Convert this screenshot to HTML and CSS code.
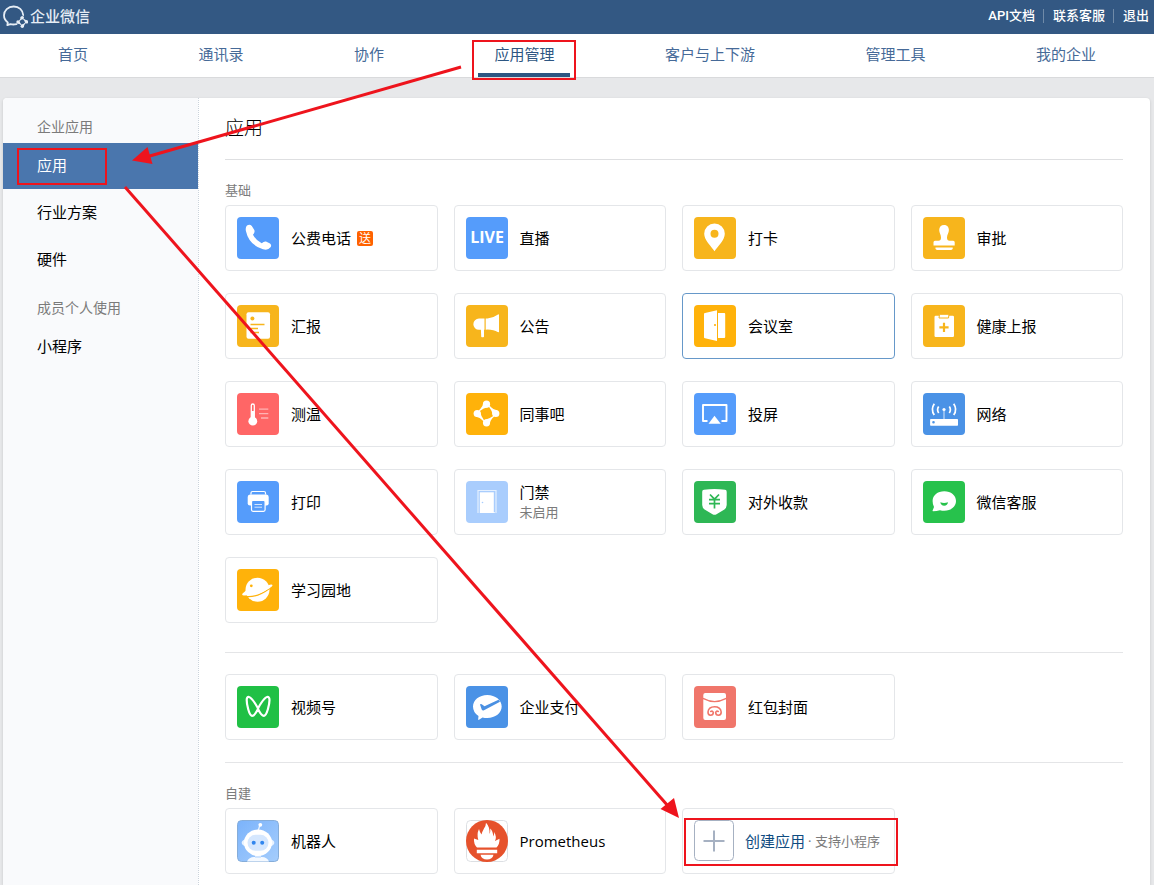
FILE: index.html
```html
<!DOCTYPE html>
<html lang="zh-CN">
<head>
<meta charset="utf-8">
<meta name="viewport" content="width=device-width, initial-scale=1">
<title>企业微信 - 应用管理</title>
<link rel="stylesheet" href="styles.css">
</head>
<body>
<header class="topbar">
  <a class="brand" href="#">
    <svg class="brand-mark" width="25" height="24" viewBox="0 0 25 24" fill="none" stroke="#e6edf5" stroke-width="1.8" stroke-linecap="round" stroke-linejoin="round" aria-hidden="true">
      <path d="M20.200 11C19.800 6 16 2.500 10.700 2.500C5 2.500 1 6.500 1 11.300C1 14.300 2.500 16.800 4.800 18.400L4.300 21.100L7.500 20.100C9.500 20.700 11.500 20.600 13.500 20.100"/>
      <g fill="#e6edf5" stroke="none"><g id="leaf"><circle cx="19.300" cy="13.600" r="1.700"/><path d="M17.800 12.800Q17.700 15 15.900 16.800L16.400 17.300Q18.200 15.600 20.300 15Z"/></g><use href="#leaf" transform="rotate(90 19.300 17.900)"/><use href="#leaf" transform="rotate(180 19.300 17.900)"/><use href="#leaf" transform="rotate(270 19.300 17.900)"/></g>
    </svg>
    <span>企业微信</span>
  </a>
  <nav class="toplinks" aria-label="账户">
    <a href="#">API文档</a>
    <a href="#">联系客服</a>
    <a href="#">退出</a>
  </nav>
</header>

<nav class="mainnav" aria-label="主导航">
  <a href="#">首页</a>
  <a href="#">通讯录</a>
  <a href="#">协作</a>
  <a class="current" href="#" aria-current="page">应用管理</a>
  <a href="#">客户与上下游</a>
  <a href="#">管理工具</a>
  <a href="#">我的企业</a>
</nav>

<div class="panel">
  <aside class="sidebar">
    <h2>企业应用</h2>
    <a class="current" href="#">应用</a>
    <a href="#">行业方案</a>
    <a href="#">硬件</a>
    <h2 class="second">成员个人使用</h2>
    <a href="#">小程序</a>
  </aside>

  <main class="content">
    <h1>应用</h1>

    <section class="group">
      <h3>基础</h3>
      <div class="cards">
        <a class="card" href="#">
          <svg class="icon sky" viewBox="0 0 42 42"><path fill="#fff" d="M10 8.500Q12.800 6.600 14.800 9L17.300 13Q18.300 15.200 16 17.700Q19 23.400 24.700 26.200Q27 24.200 29 24.600L33 26.500Q35 28 33.500 30.300Q31 33.800 26 32.300Q12 28 8.900 14Q8.200 10 10 8.500Z"/></svg>
          <span class="name">公费电话</span><span class="badge">送</span>
        </a>
        <a class="card" href="#">
          <svg class="icon sky" viewBox="0 0 42 42"><text class="live" x="21" y="26" text-anchor="middle">LIVE</text></svg>
          <span class="name">直播</span>
        </a>
        <a class="card" href="#">
          <svg class="icon amber" viewBox="0 0 42 42"><path fill="#fff" fill-rule="evenodd" d="M20.500 34.300C17 29 10.200 23 10.200 16.700A10.300 10.300 0 0 1 30.800 16.700C30.800 23 24 29 20.500 34.300ZM20.500 12.700a4 4 0 1 0 0 8a4 4 0 0 0 0-8Z"/></svg>
          <span class="name">打卡</span>
        </a>
        <a class="card" href="#">
          <svg class="icon amber" viewBox="0 0 42 42" fill="#fff"><path d="M16.200 13C16.200 9.800 18.200 7.900 21 7.900S25.900 9.800 25.900 13C25.900 16 24 17.500 24 20.500Q24 23.700 26.500 23.700H30.200Q31.700 23.700 31.700 25.200V28.600H10.500V25.200Q10.500 23.700 12 23.700H15.500Q18 23.700 18 20.500C18 17.500 16.200 16 16.200 13Z"/><path d="M12.500 30.500H29.700V31.300Q29.700 33 28 33H14.200Q12.500 33 12.500 31.300Z"/></svg>
          <span class="name">审批</span>
        </a>
        <a class="card" href="#">
          <svg class="icon amber" viewBox="0 0 42 42"><rect x="9.500" y="7.300" width="23.500" height="26.500" rx="2" fill="#fff"/><circle cx="15.400" cy="13.600" r="2" fill="#f7b51c"/><path stroke="#f7b51c" stroke-width="1.500" d="M13.500 19.600H27.500M13.500 23.500H21M13.500 27.600H22"/></svg>
          <span class="name">汇报</span>
        </a>
        <a class="card" href="#">
          <svg class="icon amber" viewBox="0 0 42 42" fill="#fff"><path d="M18.500 13.500V24.800H18V31.500Q18 32.300 17.200 32.300H15.900Q15.200 32.300 15.200 31.500L14.900 24.800H13A5.600 5.600 0 0 1 13 13.500ZM19.700 13.500H21.500Q28 12.500 32 9.400Q33 9 33 10V26.500Q33 27.800 31.700 27Q28 24.800 21.500 24.500L19.700 24.800Z"/></svg>
          <span class="name">公告</span>
        </a>
        <a class="card hover" href="#">
          <svg class="icon orange" viewBox="0 0 42 42"><path fill="#fff" d="M10 9Q10 8.200 11 8L23 5.300V36L11 33.300Q10 33 10 32.200ZM24 8H30.300Q31.200 8 31.200 9V32Q31.200 33 30.200 33H24Z"/><circle cx="21" cy="20" r="1.100" fill="#ffb20a"/></svg>
          <span class="name">会议室</span>
        </a>
        <a class="card" href="#">
          <svg class="icon amber" viewBox="0 0 42 42"><rect x="11.500" y="10.800" width="19.500" height="21.200" rx="1.200" fill="#fff"/><path d="M16.500 9.300H26L25.500 13H16Z" fill="#fff" stroke="#f7b51c" stroke-width="1"/><path stroke="#f7b51c" stroke-width="2.200" d="M21 17.800V27M16.400 22.400H25.600"/></svg>
          <span class="name">健康上报</span>
        </a>
        <a class="card" href="#">
          <svg class="icon coral" viewBox="0 0 42 42"><path d="M14.300 26V12.500a1.500 1.500 0 0 1 3 0V26" fill="#ff6666" stroke="#fff" stroke-width="1.300"/><path stroke="#fff" stroke-width="3" d="M15.800 18V28"/><circle cx="15.800" cy="28.200" r="4.400" fill="#fff"/><path stroke="#ffb3b3" stroke-width="1.300" d="M22 16.200H31.300M22 20.700H31.300M24 25H31.300"/></svg>
          <span class="name">测温</span>
        </a>
        <a class="card" href="#">
          <svg class="icon orange" viewBox="0 0 42 42" fill="#fff"><g id="petal"><circle cx="20.500" cy="11.200" r="3.600"/><path d="M17.300 9.600Q17 13.800 12.800 17.400L13.500 18.200Q17.500 15 22.500 14.100Z"/></g><use href="#petal" transform="rotate(90 20.500 20.500)"/><use href="#petal" transform="rotate(180 20.500 20.500)"/><use href="#petal" transform="rotate(270 20.500 20.500)"/></svg>
          <span class="name">同事吧</span>
        </a>
        <a class="card" href="#">
          <svg class="icon sky" viewBox="0 0 42 42"><path fill="none" stroke="#fff" stroke-width="1.900" stroke-linejoin="round" d="M13.500 28H9V12H32.500V28H27.500"/><path fill="#fff" d="M20.500 22.800L26.700 30.800H14.500Z"/></svg>
          <span class="name">投屏</span>
        </a>
        <a class="card" href="#">
          <svg class="icon blue" viewBox="0 0 42 42"><path fill="#fff" fill-rule="evenodd" d="M7.800 26H34.300Q35 26 35 26.700V32Q35 32.700 34.300 32.700H7.800Q7.100 32.700 7.100 32V26.700Q7.100 26 7.800 26ZM10.500 28a1.300 1.300 0 1 0 0 2.600a1.300 1.300 0 0 0 0-2.600Z"/><circle cx="21" cy="16.500" r="1.600" fill="#fff"/><path fill="none" stroke="#fff" stroke-width="1.700" d="M15.700 13.500Q13.500 16.700 15.700 20M26.300 13.500Q28.500 16.700 26.300 20M11.300 10.700Q7.400 16.500 11.300 22M30.700 10.700Q34.600 16.500 30.700 22"/><path stroke="#fff" stroke-width=".8" d="M21 18V26"/></svg>
          <span class="name">网络</span>
        </a>
        <a class="card" href="#">
          <svg class="icon sky" viewBox="0 0 42 42"><path fill="none" stroke="#fff" stroke-width="1.200" d="M14 13.500V12Q14 10.500 15.500 10.500H27Q28.500 10.500 28.500 12V13.500"/><path fill="#fff" d="M13 13.500H29.500Q31.700 13.500 31.700 16V22.500Q31.700 24.500 29.500 24.500H13Q10.700 24.500 10.700 22.500V16Q10.700 13.500 13 13.500Z"/><rect x="14.500" y="19.300" width="13.600" height="11" rx="1.500" fill="#559cfb" stroke="#fff" stroke-width="1.200"/><path stroke="#d4e6fe" stroke-width="1" d="M17.500 23.500H25M17.500 26.200H25"/></svg>
          <span class="name">打印</span>
        </a>
        <a class="card" href="#">
          <svg class="icon pale" viewBox="0 0 42 42"><path fill="none" stroke="#e4f0ff" stroke-width="1.200" d="M12 32V9.500H30V32M29 31.500H27"/><rect x="13.800" y="11.300" width="14" height="20.700" fill="#fff"/><circle cx="16.500" cy="21.500" r=".8" fill="#a9cdfd"/></svg>
          <span class="stack"><span class="name">门禁</span><small>未启用</small></span>
        </a>
        <a class="card" href="#">
          <svg class="icon green" viewBox="0 0 42 42"><path fill="#fff" d="M10 8.800Q20.500 7.200 31 8.800Q32.700 9 32.700 10.700V24Q32.700 27 30 28.700L22.500 33.200Q20.500 34.500 18.500 33.200L11 28.700Q8.200 27 8.200 24V10.700Q8.200 9 10 8.800Z"/><path fill="none" stroke="#2eb755" stroke-width="1.700" d="M16 13.500L20.500 18.200L25 13.500M15 18.700H26M15 22.700H26M20.500 18V27.500"/></svg>
          <span class="name">对外收款</span>
        </a>
        <a class="card" href="#">
          <svg class="icon lime" viewBox="0 0 42 42"><path fill="#fff" d="M21.300 10.300C28 10.300 33 14.500 33 20S28 29.800 21.300 29.800Q19 29.800 17 29.200Q13.500 30 10 30.200Q9.300 30 9.700 29.300L11 26Q9.600 23.500 9.600 20C9.600 14.500 14.600 10.300 21.300 10.300Z"/><path fill="#27c24c" d="M17.300 21.300Q21 22.700 25 21.300Q24.500 24.700 21.200 24.700T17.300 21.300Z"/></svg>
          <span class="name">微信客服</span>
        </a>
        <a class="card" href="#">
          <svg class="icon orange" viewBox="0 0 42 42"><circle cx="20.500" cy="20.700" r="12" fill="#fff"/><path fill="none" stroke="#ffb20a" stroke-width="1.200" d="M8 27.500Q20 29 32.500 19.500"/><path fill="#fff" d="M9 21.500L5.600 24.500Q4.300 26.300 7 26.500Q24 26.500 34.800 17.500Q36.500 15.500 34 15.600L31 16.200L31.500 18Q22 24.500 9.300 24Z"/><circle cx="14.300" cy="16.800" r="1.400" fill="#ffb20a"/></svg>
          <span class="name">学习园地</span>
        </a>
      </div>
    </section>

    <section class="group plain">
      <div class="cards">
        <a class="card" href="#">
          <svg class="icon grass" viewBox="0 0 42 42"><path fill="none" stroke="#fff" stroke-width="2.200" stroke-linejoin="round" d="M21 23C19 27 17 30 15 29.800C12 29.500 9.700 18 9.700 14C9.700 11.500 10.700 10.700 12 11C15.500 12 21 22 21 23C23 27 25 30 27 29.800C30 29.500 32.500 18 32.500 14C32.500 11.500 31.500 10.700 30 11C26.500 12 21 22 21 23Z"/></svg>
          <span class="name">视频号</span>
        </a>
        <a class="card" href="#">
          <svg class="icon blue" viewBox="0 0 42 42"><path fill="#fff" d="M21.300 9C29.300 9 35.700 14 35.700 20.500S29.300 32 21.300 32Q18.700 32 16.500 31.500L13 33.800Q12 34.200 12.200 33L12.500 30Q7 26.500 7 20.500C7 14 13.300 9 21.300 9Z"/><path fill="#4a90e2" d="M14 18.500Q14.500 17.500 15.700 18.200L18.500 20.200L32.500 13.800Q33.600 14.800 34 15.800L18 24.300Q16.500 25.200 15.700 23.500Z"/></svg>
          <span class="name">企业支付</span>
        </a>
        <a class="card" href="#">
          <svg class="icon salmon" viewBox="0 0 42 42"><path fill="#fff" d="M9.300 9Q9.300 7 11.300 7H30Q32 7 32 9V11.800Q20.500 18 9.300 11.800ZM9.300 13.300Q20.500 19.300 32 13.300V32Q32 34 30 34H11.300Q9.300 34 9.300 32Z"/><path fill="none" stroke="#f0766b" stroke-width="1.600" stroke-linecap="round" d="M16.700 25.500Q18.700 24.500 19.300 26.500Q19.300 29.300 16.500 29.300Q14 29 14 26Q14.500 20.700 20.500 20.700T27.200 26Q27.200 29 24.500 29.300Q21.700 29.300 21.700 26.500Q22.200 24.500 24.300 25.500"/></svg>
          <span class="name">红包封面</span>
        </a>
      </div>
    </section>

    <section class="group last">
      <h3>自建</h3>
      <div class="cards">
        <a class="card" href="#">
          <svg class="icon" viewBox="0 0 42 42"><defs><linearGradient id="bot" x1="0" y1="0" x2="1" y2="1"><stop offset="0" stop-color="#7bb3fb"/><stop offset="1" stop-color="#a5cdfc"/></linearGradient></defs><rect x=".5" y=".5" width="41" height="41" rx="4" fill="url(#bot)" stroke="#86add9"/><path stroke="#e8f3ff" stroke-width="1.300" d="M21 11L23 5"/><circle cx="23.300" cy="4.800" r="1.900" fill="#fff"/><path d="M10 41.500Q12 37 17 37H25Q30 37 32 41.500Z" fill="#f4f9ff"/><rect x="18" y="34" width="6" height="4" fill="#cfe4fe"/><ellipse cx="21" cy="22.700" rx="16.300" ry="6" fill="#e9f3ff"/><ellipse cx="21" cy="22.700" rx="14" ry="13.300" fill="#fff"/><rect x="10.500" y="14.800" width="21" height="16" rx="8" fill="#d5e7fe"/><circle cx="16.700" cy="22.800" r="2" fill="#3186ee"/><circle cx="25.200" cy="22.800" r="2" fill="#3186ee"/></svg>
          <span class="name">机器人</span>
        </a>
        <a class="card" href="#">
          <svg class="icon" viewBox="0 0 42 42"><rect x=".5" y=".5" width="41" height="41" rx="4" fill="#fff" stroke="#dcdfe3"/><circle cx="21" cy="21" r="21" fill="#e6522c"/><path fill="#fff" d="M11 27.500Q7.500 24 8 18.500L12.300 20Q10.500 14 13 9Q14 13 15.500 14.500Q16 12 18 8.500Q20 5.500 20 2.800Q24 7 23.500 14Q24.500 12 24.300 8.500Q27 11 27.200 16.500Q28.500 14.500 28.300 12Q31 17 29 21L33.500 18.700Q33.800 24 30.500 27.500ZM10.800 29.700H31.200V33.300H10.800ZM14.500 34.800H27.500Q26.500 39.500 21 39.500T14.500 34.800Z"/></svg>
          <span class="name latin">Prometheus</span>
        </a>
        <a class="card create" href="#">
          <svg class="icon" viewBox="0 0 42 42"><rect x=".5" y=".5" width="39" height="40" rx="4" fill="#fff" stroke="#a6b1c2"/><path stroke="#a6b1c2" stroke-width="2" d="M9.500 21H30.500M20 10.500V31.500"/></svg>
          <span class="name">创建应用</span><span class="hint">· 支持小程序</span>
        </a>
      </div>
    </section>
  </main>
</div>

<svg class="annotations" width="1154" height="885" viewBox="0 0 1154 885" aria-hidden="true">
  <g fill="none" stroke="#ee141d" stroke-width="2">
    <rect x="473" y="41" width="102" height="38"/>
    <rect x="18" y="149" width="88" height="35"/>
    <rect x="685" y="819" width="212" height="46"/>
    <g stroke-width="3"><path d="M461 67L148 156.500"/><path d="M125 187L668 806"/></g>
  </g>
  <path fill="#ee141d" d="M132 160.500L147.500 147L152.500 164ZM679 818L660.500 809L674 798Z"/>
</svg>
</body>
</html>
```

FILE: styles.css
```css
* {
  box-sizing: border-box;
}

body {
  position: relative;
  display: flex;
  flex-direction: column;
  min-height: 100vh;
  margin: 0;
  background: #e7e8ea;
  color: #000;
  font: 15px/22px "Noto Sans", "Noto Sans CJK SC", sans-serif;
}

a {
  color: inherit;
  text-decoration: none;
}

h1,
h2,
h3 {
  margin: 0;
  font-weight: 400;
}

.topbar {
  display: flex;
  align-items: center;
  justify-content: space-between;
  height: 34px;
  padding: 0 5px 2px 3px;
  background: #335883;
  color: #fff;
}

.brand {
  display: flex;
  align-items: center;
  gap: 2px;
  color: #e6edf5;
  font-family: "Noto Sans CJK SC", sans-serif;
  font-size: 15px;
  font-weight: 500;
}

.toplinks {
  display: flex;
  font-family: Roboto, "Noto Sans CJK SC", sans-serif;
  font-size: 13px;
  font-weight: 500;
  line-height: 14px;
}

.toplinks a + a {
  margin-left: 8px;
  padding-left: 9px;
  border-left: 1px solid #6f8aa8;
}

.mainnav {
  display: flex;
  justify-content: space-between;
  height: 44px;
  padding: 0 42px;
  background: #fff;
  border-bottom: 1px solid #d9dadc;
  color: #466a98;
}

.mainnav a {
  padding: 9px 16px 8px;
  border-bottom: 4px solid transparent;
  white-space: nowrap;
}

.mainnav .current {
  border-color: #2d5682;
  color: #2d5682;
}

.panel {
  display: flex;
  flex: 1;
  margin: 20px 4px 0 3px;
  background: #fff;
  border-radius: 4px 4px 0 0;
  box-shadow: 0 1px 3px rgba(0, 0, 0, 0.15);
}

.sidebar {
  display: flex;
  flex: 0 0 196px;
  flex-direction: column;
  gap: 1px;
  padding-top: 14px;
  background: #f9fafc;
  background-clip: padding-box;
  border-right: 1px dotted #cbd3dc;
  border-radius: 4px 0 0;
}

.sidebar h2 {
  padding-left: 34px;
  color: #7b7b7b;
  font-size: 14px;
  line-height: 30px;
}

.sidebar .second {
  margin-top: 9px;
}

.sidebar a {
  padding: 0 0 2px 34px;
  line-height: 44px;
}

.sidebar .current {
  background: #4a76ad;
  color: #fff;
}

.content {
  flex: 1;
  min-width: 0;
  padding: 0 27px 0 26px;
}

.content h1 {
  border-bottom: 1px solid #dedfe1;
  font-size: 19px;
  font-weight: 300;
  line-height: 61px;
}

.group {
  padding: 19px 0 29px;
  border-bottom: 1px solid #e4e5e7;
}

.group h3 {
  margin-bottom: 4px;
  color: #7b7b7b;
  font-size: 13px;
}

.plain {
  padding: 21px 0 22px;
}

.last {
  padding-bottom: 10px;
  border: 0;
}

.cards {
  display: grid;
  grid-template-columns: repeat(4, minmax(0, 1fr));
  gap: 22px 16px;
}

.card {
  display: flex;
  align-items: center;
  min-height: 66px;
  padding: 0 11px;
  border: 1px solid #e4e6e9;
  border-radius: 4px;
  white-space: nowrap;
}

.hover {
  border-color: #6698c9;
}

.icon {
  flex: none;
  width: 42px;
  height: 42px;
  margin-right: 12px;
  border-radius: 4px;
}

.sky { background: #559cfb; }
.amber { background: #f7b51c; }
.orange { background: #ffb20a; }
.coral { background: #ff6666; }
.blue { background: #4a92e6; }
.pale { background: #a9cdfd; }
.green { background: #2eb755; }
.lime { background: #27c24c; }
.grass { background: #20c045; }
.salmon { background: #f0766b; }

.live {
  fill: #fff;
  font: 700 16px "Open Sans", sans-serif;
}

.latin {
  font-family: "Open Sans", sans-serif;
}

.badge {
  margin-left: 6px;
  padding: 0 2px;
  background: #ff6200;
  border-radius: 2px;
  color: #fff;
  font-size: 12px;
  line-height: 15px;
}

.stack {
  display: flex;
  flex-direction: column;
}

.stack .name,
.stack small {
  line-height: 20px;
}

.stack small,
.hint {
  color: #7b7b7b;
  font-size: 13px;
}

.create .icon {
  margin-right: 9px;
}

.create .name {
  margin-right: 3px;
  color: #0f4c81;
}

.annotations {
  position: absolute;
  top: 0;
  left: 0;
  pointer-events: none;
}
```
